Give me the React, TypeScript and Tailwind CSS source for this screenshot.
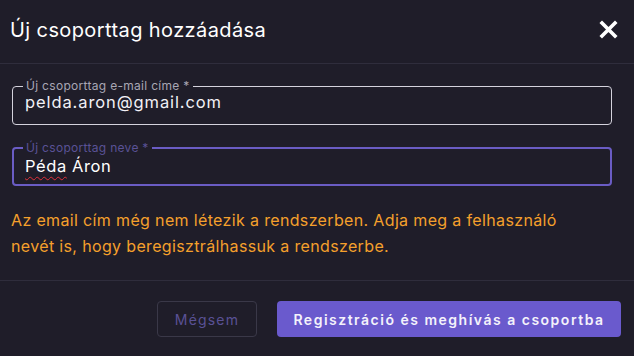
import type { ReactNode } from 'react';

const font = { fontFamily: 'Inter, "Noto Sans", sans-serif' };

function OutlinedField({
  label,
  children,
  focused,
}: {
  label: string;
  children: ReactNode;
  focused?: boolean;
}) {
  return (
    <fieldset
      className={
        focused
          ? 'ml-3 mr-[22px] h-[43px] rounded-[4px] border-2 border-[#6a5cc4] px-[11px]'
          : 'ml-3 mr-[22px] h-[44px] rounded-[4px] border border-[#d4d2dc] px-[12px]'
      }
    >
      <legend
        className={
          focused
            ? 'ml-[-2px] px-[3px] text-[12px] leading-[10px] tracking-[0.3px] text-[#5a5296]'
            : 'ml-[-2px] px-[3px] text-[12px] leading-[10px] tracking-[0.3px] text-[#a8a6b4]'
        }
      >
        {label}
      </legend>
      <div
        className={
          focused
            ? 'mt-[3px] text-[16.5px] leading-[20px] tracking-[0.6px] text-white'
            : 'mt-[1px] text-[16.5px] leading-[20px] tracking-[0.9px] text-[#f2f1f6]'
        }
      >
        {children}
      </div>
    </fieldset>
  );
}

export default function App() {
  return (
    <div className="h-[356px] w-[634px] overflow-hidden bg-[#1f1d29]" style={font}>
      {/* Header */}
      <div className="flex h-[63px] items-center justify-between pl-[10px] pr-[16px] pb-[4px]">
        <h2 className="text-[20px] font-normal tracking-[0.4px] text-white">Új csoporttag hozzáadása</h2>
        <button className="text-white">
          <svg width="19" height="19" viewBox="0 0 19 19">
            <path d="M3 3 L16 16 M16 3 L3 16" stroke="white" strokeWidth="3.6" strokeLinecap="square" />
          </svg>
        </button>
      </div>
      <div className="h-px bg-[#2f2d3c]" />

      {/* Body */}
      <div className="flex h-[216px] flex-col pt-[17px]">
        <OutlinedField label="Új csoporttag e-mail címe *">pelda.aron@gmail.com</OutlinedField>
        <div className="h-[18px]" />
        <OutlinedField label="Új csoporttag neve *" focused>
          <span className="underline decoration-[#e0303a] decoration-wavy decoration-1 underline-offset-[4px]">Péda</span>{' '}
          Áron
        </OutlinedField>
        <p className="mt-[21px] px-[11px] text-[16px] leading-[26px] tracking-[0.35px] text-[#f5a02c]">
          Az email cím még nem létezik a rendszerben. Adja meg a felhasználó
          <br />
          nevét is, hogy beregisztrálhassuk a rendszerbe.
        </p>
      </div>
      <div className="h-px bg-[#2f2d3c]" />

      {/* Footer */}
      <div className="flex justify-end gap-[20px] pr-[13px] pt-[20px]">
        <button className="h-[36px] w-[100px] rounded-[4px] border border-[#3a3848] text-[14px] tracking-[1.2px] text-[#5a5195]">
          Mégsem
        </button>
        <button className="h-[36px] w-[344px] rounded-[4px] bg-[#6a5acd] text-[14px] font-semibold tracking-[1.5px] text-[#f4f2fb]">
          Regisztráció és meghívás a csoportba
        </button>
      </div>
    </div>
  );
}
